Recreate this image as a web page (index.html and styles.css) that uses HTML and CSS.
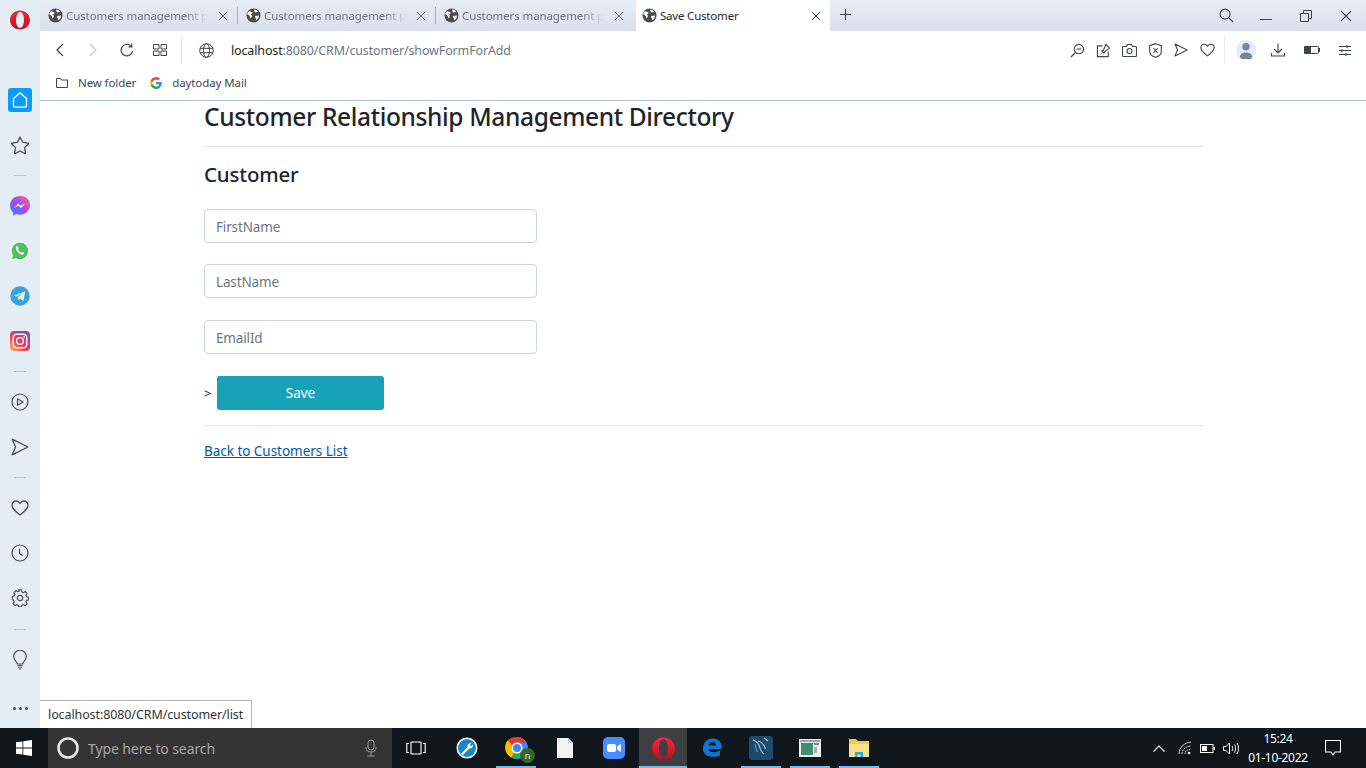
FILE: index.html
```html
<!DOCTYPE html>
<html lang="en">
<head>
<meta charset="utf-8">
<title>Save Customer</title>
<link rel="stylesheet" href="styles.css">
</head>
<body>
<svg class="defs" width="0" height="0" aria-hidden="true">
  <defs>
    <linearGradient id="opera" x1="0" y1="0" x2="0" y2="1"><stop offset="0" stop-color="#f5263a"/><stop offset="1" stop-color="#c00d22"/></linearGradient>
    <symbol id="fav" viewBox="0 0 16 16"><circle cx="8" cy="8" r="7.5" fill="#4a4d52"/><path d="M3 3.5c2 .2 3 1 4 1.2.5.8-.4 1.6-1.2 1.6-.8.5-.3 1.4.4 1.8.3 1.2-.5 2.4-1.2 3-1-1-.7-2.200-1.600-3C2.600 7.500 1.500 7 1.200 6.500 1.500 5.200 2.200 4.200 3 3.500zM9 1.500c1.500.2 3 1 4 2.300-.8.300-1.600.300-2 1-.6.300-1.500-.3-1.700-1-.3-.8-.8-1.300-.3-2.300zM10 8.500c1.200-.5 2.600-.4 3.800-.6 0 2-1 3.800-2.600 5-1-.8-.6-2-1.200-2.700-.5-.5-.4-1.300 0-1.700z" fill="#fff"/></symbol>
    <symbol id="x" viewBox="0 0 12 12"><path d="M1 1l10 10M11 1L1 11" fill="none" stroke="currentColor" stroke-width="1.100"/></symbol>
    <symbol id="heart" viewBox="0 0 18 16"><path d="M9 15C4 11 1 8.500 1 5.200 1 2.800 2.800 1 5 1c1.700 0 3.100 1 4 2.500C9.900 2 11.300 1 13 1c2.200 0 4 1.800 4 4.200C17 8.500 14 11 9 15z" fill="none" stroke="currentColor" stroke-width="1.300" stroke-linejoin="round"/></symbol>
    <symbol id="send" viewBox="0 0 18 18"><path d="M1.200 1.200L17 9 1.200 16.800 4.500 9z" fill="none" stroke="currentColor" stroke-width="1.300" stroke-linejoin="round"/></symbol>
    <symbol id="opera-o" viewBox="0 0 20 20"><path fill-rule="evenodd" d="M10 .5C15.500.5 20 4.700 20 10s-4.500 9.500-10 9.500S0 15.300 0 10 4.500.5 10 .5zM10 2C7.700 2 6 5.600 6 10s1.700 8 4 8 4-3.600 4-8-1.700-8-4-8z" fill="url(#opera)"/></symbol>
  </defs>
</svg>
<div class="screen">
  <div class="browser">
    <aside class="sidebar">
      <div class="logo-cell">
        <svg width="20" height="20"><use href="#opera-o"/></svg>
      </div>
      <div class="side-item">
        <span class="home-tile"><svg width="18" height="18" viewBox="0 0 18 18"><path d="M2.500 7.500L9 1.800l6.500 5.700v6.700c0 1.200-.8 2-2 2h-9c-1.200 0-2-.8-2-2z" fill="none" stroke="#fff" stroke-width="1.300" stroke-linejoin="round"/></svg></span>
      </div>
      <div class="side-item">
        <svg width="18" height="18" viewBox="0 0 18 18"><path d="M9 1l2.500 4.900c.1.300.4.400.7.500l5.100.8c.3.100.4.400.2.600l-3.600 3.600c-.2.200-.3.500-.3.800l.9 5c0 .3-.3.500-.5.400l-4.500-2.400c-.3-.1-.6-.1-.9 0l-4.500 2.400c-.3.100-.6-.1-.5-.4l.9-5c0-.3-.1-.6-.3-.8L.7 7.800c-.2-.2-.1-.5.200-.6l5.100-.8c.3 0 .6-.2.700-.5z" fill="none" stroke="#4c5159" stroke-width="1.300" stroke-linejoin="round"/></svg>
      </div>
      <div class="side-sep"></div>
      <div class="side-item">
        <svg width="20" height="20" viewBox="0 0 20 20"><defs><linearGradient id="msg" x1="0" y1="1" x2="1" y2="0"><stop offset="0" stop-color="#1f8cff"/><stop offset=".5" stop-color="#a04cf5"/><stop offset="1" stop-color="#ff6b6b"/></linearGradient></defs><path d="M10 0C4.400 0 0 4.100 0 9.500c0 2.800 1.200 5.300 3.200 7v3.300l3.100-1.700c1.200.4 2.400.6 3.700.6 5.600 0 10-4.100 10-9.700S15.600 0 10 0z" fill="url(#msg)"/><path d="M4 12l4.200-4.400 2.400 2.200 4.600-2.400-4.200 4.500-2.500-2.300z" fill="#fff"/></svg>
      </div>
      <div class="side-item">
        <svg width="20" height="20" viewBox="0 0 20 20"><path d="M10 .8A9 9 0 0 0 2.300 14.500L1 19l4.700-1.200A9 9 0 1 0 10 .8z" fill="#4ec05f" stroke="#fff" stroke-width="1.200"/><path d="M6.500 5.500c-1 1-.9 2.700.6 4.800 1.600 2.200 3.500 3.500 5.100 3.400 1-.1 1.900-1 1.800-1.800l-2-1.100-1 .9c-1-.4-2.300-1.700-2.900-2.900l.8-1-1-2.200c-.4-.3-.9-.4-1.400-.1z" fill="#fff"/></svg>
      </div>
      <div class="side-item">
        <svg width="20" height="20" viewBox="0 0 20 20"><circle cx="10" cy="10" r="9.700" fill="#37a2dc"/><path d="M3.800 9.800l11.500-4.600-1.900 9.800-3.400-2.500-1.700 1.700-.4-3 5-4.500-6.200 3.800z" fill="#e9f4fb"/></svg>
      </div>
      <div class="side-item">
        <svg width="20" height="20" viewBox="0 0 20 20"><defs><linearGradient id="ig" x1="0" y1="1" x2="1" y2="0"><stop offset="0" stop-color="#fdc64e"/><stop offset=".35" stop-color="#ee4a4f"/><stop offset=".7" stop-color="#c4358f"/><stop offset="1" stop-color="#5a57c9"/></linearGradient></defs><rect width="20" height="20" rx="4" fill="url(#ig)"/><rect x="3.200" y="3.200" width="13.600" height="13.600" rx="3.500" fill="none" stroke="#fff" stroke-width="1.400"/><circle cx="10" cy="10" r="3.400" fill="none" stroke="#fff" stroke-width="1.400"/><circle cx="14.200" cy="5.800" r=".9" fill="#fff"/></svg>
      </div>
      <div class="side-sep"></div>
      <div class="side-item">
        <svg width="18" height="18" viewBox="0 0 18 18"><circle cx="9" cy="9" r="8" fill="none" stroke="#4c5159" stroke-width="1.200"/><path d="M6.500 5.800l5.600 3.200-5.600 3.200z" fill="none" stroke="#4c5159" stroke-width="1.200" stroke-linejoin="round"/></svg>
      </div>
      <div class="side-item side-icon">
        <svg width="18" height="18"><use href="#send"/></svg>
      </div>
      <div class="side-sep"></div>
      <div class="side-item side-icon">
        <svg width="18" height="16"><use href="#heart"/></svg>
      </div>
      <div class="side-item">
        <svg width="18" height="18" viewBox="0 0 18 18"><circle cx="9" cy="9" r="8" fill="none" stroke="#4c5159" stroke-width="1.200"/><path d="M8.500 4.500V9.500l3 2.300" fill="none" stroke="#4c5159" stroke-width="1.200"/></svg>
      </div>
      <div class="side-item">
        <svg width="18" height="18" viewBox="0 0 18 18"><path d="M7.500 1h3l.4 2.200 1.500.7 1.900-1.200 2.100 2.100-1.200 1.900.7 1.500 2.100.4v3l-2.100.4-.7 1.500 1.200 1.900-2.100 2.100-1.900-1.200-1.500.7-.4 1.600h-3l-.4-1.600-1.500-.7-1.900 1.200-2.100-2.100 1.200-1.900-.7-1.500L1 10.600v-3l2.100-.4.7-1.500-1.200-1.900 2.100-2.100 1.900 1.200 1.500-.7z" transform="translate(.4 -.1) scale(.96)" fill="none" stroke="#4c5159" stroke-width="1.200" stroke-linejoin="round"/><circle cx="9" cy="9" r="2.700" fill="none" stroke="#4c5159" stroke-width="1.200"/></svg>
      </div>
      <div class="side-sep side-sep-b"></div>
      <div class="side-item">
        <svg width="16" height="20" viewBox="0 0 16 20"><path d="M5.500 14c0-2-3.800-3.500-3.800-7.500a6.300 6.300 0 0 1 12.600 0c0 4-3.800 5.500-3.800 7.500z" fill="none" stroke="#4c5159" stroke-width="1.200"/><path d="M5.500 15.500h5M6 17.200h4M6.800 19h2.400" stroke="#4c5159" stroke-width="1.100"/></svg>
      </div>
      <div class="side-dots"><i></i><i></i><i></i></div>
    </aside>

    <div class="window">
      <div class="tabstrip">
        <div class="tab">
          <svg class="fav" width="15" height="15"><use href="#fav"/></svg>
          <span class="tab-title">Customers management pc</span>
          <svg class="tab-x" width="10" height="10"><use href="#x"/></svg>
        </div>
        <div class="tab">
          <svg class="fav" width="15" height="15"><use href="#fav"/></svg>
          <span class="tab-title">Customers management pc</span>
          <svg class="tab-x" width="10" height="10"><use href="#x"/></svg>
        </div>
        <div class="tab tab-last">
          <svg class="fav" width="15" height="15"><use href="#fav"/></svg>
          <span class="tab-title">Customers management pc</span>
          <svg class="tab-x" width="10" height="10"><use href="#x"/></svg>
        </div>
        <div class="tab tab-active">
          <svg class="fav" width="15" height="15"><use href="#fav"/></svg>
          <span class="tab-title">Save Customer</span>
          <svg class="tab-x" width="10" height="10"><use href="#x"/></svg>
        </div>
        <svg class="tab-plus" width="11" height="11" viewBox="0 0 11 11"><path d="M5.500 0v11M0 5.500h11" stroke="#3e434a" stroke-width="1.100"/></svg>
        <div class="win-controls">
          <svg width="15" height="15" viewBox="0 0 16 16"><circle cx="6.500" cy="6.500" r="5.300" fill="none" stroke="#3e434a" stroke-width="1.200"/><path d="M10.500 10.500l4.500 4.500" stroke="#3e434a" stroke-width="1.400"/></svg>
          <svg class="wc-min" width="12" height="12" viewBox="0 0 12 12"><path d="M0 9.500h12" stroke="#3e434a" stroke-width="1"/></svg>
          <svg class="wc-res" width="12" height="12" viewBox="0 0 12 12"><path d="M.5 3.500h8v8h-8zM3.500 3.500v-3h8v8h-3" fill="none" stroke="#3e434a" stroke-width="1"/></svg>
          <svg class="wc-close" width="12" height="12"><use href="#x"/></svg>
        </div>
      </div>

      <div class="toolbar">
        <svg class="t-back" width="10" height="14" viewBox="0 0 10 14"><path d="M8 1L2 7l6 6" fill="none" stroke="#3e434a" stroke-width="1.200"/></svg>
        <svg class="t-fwd" width="10" height="14" viewBox="0 0 10 14"><path d="M2 1l6 6-6 6" fill="none" stroke="#c3c8ce" stroke-width="1.200"/></svg>
        <svg class="t-reload" width="14" height="14" viewBox="0 0 14 14"><path d="M12.500 8a5.700 5.700 0 1 1-1.700-5M11.800.5v3.300H8.500" fill="none" stroke="#3e434a" stroke-width="1.200"/></svg>
        <svg class="t-dial" width="14" height="12" viewBox="0 0 14 12"><path d="M.5.500h5.500v4.500H.5zM8 .5h5.500v4.500H8zM.5 7h5.500v4.500H.5zM8 7h5.500v4.500H8z" fill="none" stroke="#3e434a" stroke-width="1"/></svg>
        <span class="t-sep t-sep-a"></span>
        <svg class="t-globe" width="15" height="15" viewBox="0 0 15 15"><g fill="none" stroke="#3e434a" stroke-width="1"><circle cx="7.500" cy="7.500" r="6.800"/><ellipse cx="7.500" cy="7.500" rx="3" ry="6.800"/><path d="M1 5.300h13M1 9.700h13"/></g></svg>
        <span class="url"><b>localhost</b>:8080/CRM/customer/showFormForAdd</span>
        <div class="t-right">
          <svg width="15" height="15" viewBox="0 0 16 15"><circle cx="9.500" cy="6" r="5" fill="none" stroke="#3e434a" stroke-width="1.200"/><path d="M7 6h5" stroke="#3e434a" stroke-width="1.200"/><path d="M6 9.500L1 14.500" stroke="#3e434a" stroke-width="1.400"/></svg>
          <svg width="15" height="15" viewBox="0 0 16 15"><path d="M7 2.500H1.500v11.500H13V8.500" fill="none" stroke="#3e434a" stroke-width="1.200"/><path d="M10.500 1l4 4-5 3.500-1 2-2.500-2.500 2-1z" fill="none" stroke="#3e434a" stroke-width="1.200" stroke-linejoin="round"/><path d="M6 10.500l-1.500 1.500" stroke="#3e434a"/></svg>
          <svg width="15" height="13" viewBox="0 0 15 13"><path d="M1.500 2.500h3l1-2h4l1 2h3c.5 0 1 .5 1 1v8c0 .5-.5 1-1 1h-12c-.5 0-1-.5-1-1v-8c0-.5.5-1 1-1z" fill="none" stroke="#3e434a" stroke-width="1.100"/><circle cx="7.500" cy="7" r="2.500" fill="none" stroke="#3e434a" stroke-width="1.100"/></svg>
          <svg width="13" height="15" viewBox="0 0 13 15"><path d="M6.500.7l5.800 2v6c0 2.500-2.500 4.500-5.800 5.600C3.200 13.200.7 11.200.7 8.700v-6z" fill="none" stroke="#3e434a" stroke-width="1.100"/><path d="M4.300 5l4.400 5M8.700 5l-4.400 5" stroke="#3e434a" stroke-width="1.100"/></svg>
          <svg width="14" height="14"><use href="#send"/></svg>
          <svg width="15" height="14"><use href="#heart"/></svg>
        </div>
        <span class="t-sep t-sep-b"></span>
        <span class="avatar"><svg width="20" height="20" viewBox="0 0 20 20"><circle cx="10" cy="6.700" r="3.700" fill="#74879c"/><path d="M3.500 19c0-4.500 2.500-6.500 6.500-6.500s6.500 2 6.500 6.500z" fill="#74879c"/></svg></span>
        <svg class="t-dl" width="14" height="14" viewBox="0 0 14 14"><path d="M7 .5v9M3 6l4 4 4-4M.5 10v3h13v-3" fill="none" stroke="#3e434a" stroke-width="1.100"/></svg>
        <svg class="t-bat" width="16" height="8" viewBox="0 0 16 8"><rect x=".5" y=".5" width="14" height="7" rx="1" fill="#fff" stroke="#3e434a"/><rect x="0" y="0" width="7" height="8" rx="1" fill="#3e434a"/><rect x="15" y="2" width="1" height="4" fill="#3e434a"/></svg>
        <svg class="t-set" width="12" height="11" viewBox="0 0 12 11"><path d="M0 1.500h12M0 5.500h12M0 9.500h12M8 0v3M3 4v3M7 8v3" stroke="#3e434a" stroke-width="1"/></svg>
      </div>

      <div class="bookmarks">
        <svg class="bm-folder" width="12" height="10" viewBox="0 0 12 10"><path d="M.5.500h4l1 1.500h6v7.500H.5z" fill="none" stroke="#3e434a" stroke-width="1"/></svg>
        <span class="bm-text">New folder</span>
        <svg class="bm-g" width="12" height="12" viewBox="0 0 12 12"><path d="M11.800 6.100c0-.4 0-.8-.1-1.100H6v2.200h3.300c-.1.700-.5 1.300-1.200 1.700v1.500h1.900c1.100-1 1.800-2.500 1.800-4.300z" fill="#4285f4"/><path d="M6 12c1.600 0 3-.5 4-1.500L8.100 9c-.5.400-1.200.6-2.100.6-1.600 0-2.900-1-3.400-2.500H.7v1.500C1.700 10.600 3.700 12 6 12z" fill="#34a853"/><path d="M2.600 7.100a3.500 3.500 0 0 1 0-2.200V3.400H.7a6 6 0 0 0 0 5.200z" fill="#fbbc05"/><path d="M6 2.400c.9 0 1.700.3 2.300.9L10 1.600A6 6 0 0 0 .7 3.400l1.900 1.500C3.100 3.400 4.400 2.400 6 2.400z" fill="#ea4335"/></svg>
        <span class="bm-text">daytoday Mail</span>
      </div>

      <main class="page">
        <div class="container">
          <h3 class="page-title">Customer Relationship Management Directory</h3>
          <hr class="rule">
          <h4 class="form-title">Customer</h4>
          <form class="form">
            <input class="field" type="text" placeholder="FirstName">
            <input class="field" type="text" placeholder="LastName">
            <input class="field" type="text" placeholder="EmailId">
            <div class="save-row"><span class="stray">&gt;</span><button class="save" type="button">Save</button></div>
          </form>
          <hr class="rule rule-b">
          <a class="back" href="#">Back to Customers List</a>
        </div>
        <div class="status">localhost:8080/CRM/customer/list</div>
      </main>
    </div>
  </div>

  <footer class="taskbar">
    <div class="start"><svg width="16" height="16" viewBox="0 0 16 16"><path d="M0 2.300l6.500-.9v6.200H0zM7.300 1.300L16 0v7.600H7.300zM0 8.400h6.500v6.200L0 13.700zM7.300 8.400H16V16l-8.700-1.200z" fill="#fff"/></svg></div>
    <div class="search">
      <svg class="cortana" width="22" height="22" viewBox="0 0 22 22"><circle cx="11" cy="11" r="9.500" fill="none" stroke="#e6e6e6" stroke-width="2.600"/></svg>
      <span class="search-text">Type here to search</span>
      <svg class="mic" width="12" height="18" viewBox="0 0 12 18"><rect x="3" y="1" width="6" height="10" rx="3" fill="none" stroke="#9a9a9a"/><path d="M.8 8c0 3.500 2 5 5.200 5s5.200-1.500 5.200-5M6 13v3.500M2.500 17h7" fill="none" stroke="#9a9a9a"/></svg>
    </div>
    <div class="tb-cell tb-view"><svg width="20" height="14" viewBox="0 0 20 14"><path d="M5 1h10v12H5zM3 2.500H.8v9H3M17 2.500h2.200v9H17" fill="none" stroke="#fff" stroke-width="1.100"/></svg></div>
    <div class="tb-cell tb-a"><svg width="22" height="22" viewBox="0 0 22 22"><circle cx="11" cy="11" r="10.500" fill="#fff"/><circle cx="11" cy="11" r="9" fill="#1a86c8"/><path d="M5 17l6.500-7c-.4-1.800 1-4 4-4l-1.700 2 1.300 1.300 2-1.700c.2 2.500-2 4.300-4 4L7 18z" fill="#fff"/></svg></div>
    <div class="tb-cell tb-b tb-on">
      <svg class="chrome" width="24" height="24" viewBox="0 0 24 24"><circle cx="12" cy="12" r="11" fill="#4285f4"/><path d="M12 1a11 11 0 0 1 9.500 5.500H12A5.500 5.500 0 0 0 7 9.500L3 4a11 11 0 0 1 9-3z" fill="#e33b2e"/><path d="M3 4l4 5.500c-1 2 .1 5 2.500 6.500L6.500 21.500A11 11 0 0 1 3 4z" fill="#f8bd00"/><path d="M9.500 16l-3 5.500A11 11 0 0 0 12 23l6-7z" fill="#2da94f"/><circle cx="12" cy="12" r="4.800" fill="#4285f4" stroke="#fff" stroke-width="1.500"/></svg>
      <span class="n-badge">n</span>
    </div>
    <div class="tb-cell tb-c"><svg width="16" height="20" viewBox="0 0 16 20"><path d="M0 0h11l5 5v15H0z" fill="#f4f4f4"/><path d="M11 0l5 5h-5z" fill="#cfcfcf"/></svg></div>
    <div class="tb-cell tb-d"><svg width="22" height="22" viewBox="0 0 22 22"><rect width="22" height="22" rx="5" fill="#4a8cff"/><rect x="4" y="7" width="9" height="8" rx="2" fill="#fff"/><path d="M14 9.500l4-2.500v8l-4-2.500z" fill="#fff"/></svg></div>
    <div class="tb-cell tb-e tb-on tb-active"><svg width="23" height="23"><use href="#opera-o"/></svg></div>
    <div class="tb-cell tb-f"><svg width="20" height="20" viewBox="0 0 20 20"><path d="M1 11C1 5 5 .5 11 .5c5 0 8.500 3.200 8.500 8v2.500H6.500c.3 3.500 5.500 4.500 11.500 1.500v5c-6 2.500-14 1.500-16-3-.8-1.500-1-2.500-1-3.500zM6.500 7.500h7.500C14 5 12.500 4 10.500 4S7 5 6.500 7.500z" fill="#0c78d6"/></svg></div>
    <div class="tb-cell tb-g tb-on"><svg width="24" height="24" viewBox="0 0 24 24"><rect width="24" height="24" rx="3" fill="#1f4a6e"/><path d="M4 4c3 1 6 4 7 8 .5 2.500 2 4 3.500 6M9 5c4 1 6.500 4.500 7.500 8M15 2l4 3" fill="none" stroke="#a9c6dc" stroke-width="1.100"/><path d="M6 8c0 3 1.500 5 2.500 8" fill="none" stroke="#6f97b5" stroke-width="1.100"/></svg></div>
    <div class="tb-cell tb-h tb-on"><svg width="22" height="18" viewBox="0 0 22 18"><rect width="22" height="18" fill="#eef0f0"/><rect x="1" y="1" width="20" height="2" fill="#9aa4aa"/><rect x="2" y="4" width="12" height="12" fill="#3f8f70"/><rect x="15" y="4" width="5" height="2" fill="#7a8a92"/><rect x="15" y="8" width="3" height="6" fill="#9fb2b8"/></svg></div>
    <div class="tb-cell tb-i tb-on"><svg width="22" height="18" viewBox="0 0 22 18"><path d="M1 0h7l2 2h11v16H1z" fill="#f4c84f"/><path d="M1 5h20v13H1z" fill="#fbe08a"/><path d="M7 18v-5h8v5h-2.500v-2.500h-3V18z" fill="#2fa9e6"/></svg></div>
    <div class="tray">
      <svg class="tr-up" width="12" height="7" viewBox="0 0 12 7"><path d="M.5 6.500L6 1l5.500 5.500" fill="none" stroke="#fff" stroke-width="1.100"/></svg>
      <svg class="tr-wifi" width="14" height="14" viewBox="0 0 14 14"><g fill="none" stroke="#d0d0d0" stroke-width="1"><path d="M1 13C1 7 6 1.500 13 1"/><path d="M4 13c0-4 3.500-8 9-8" stroke-dasharray="2 .6"/><path d="M7 13c0-2.500 2-4.500 5-4.500" stroke-dasharray="1.500 .6"/></g><circle cx="11" cy="12" r="1.300" fill="#fff"/></svg>
      <svg class="tr-bat" width="15" height="9" viewBox="0 0 15 9"><rect x=".5" y=".5" width="12.500" height="8" fill="none" stroke="#fff"/><rect x="2" y="2" width="5" height="5" fill="#fff"/><rect x="13.500" y="3" width="1.500" height="3" fill="#fff"/></svg>
      <svg class="tr-vol" width="17" height="13" viewBox="0 0 17 13"><path d="M.5 4.500h2.500L6.500 1v11L3 8.500H.5z" fill="none" stroke="#fff"/><path d="M9 4c1 1.500 1 3.500 0 5M11.500 2.500c1.500 2.500 1.500 5.500 0 8M14 1c2 3 2 8 0 11" fill="none" stroke="#fff"/></svg>
      <div class="clock"><span>15:24</span><span>01-10-2022</span></div>
      <svg class="tr-note" width="16" height="16" viewBox="0 0 16 16"><path d="M.5.500h15v11.500H10l-2 3-2-3H.500z" fill="none" stroke="#fff" stroke-width="1.100"/></svg>
    </div>
  </footer>
</div>
</body>
</html>
```

FILE: styles.css
```css
* { box-sizing: border-box; }
html, body { margin: 0; padding: 0; }
body {
  width: 1366px;
  height: 768px;
  overflow: hidden;
  font-family: "Noto Sans", "Open Sans", sans-serif;
  background: #fff;
}
.defs { position: absolute; }
svg { display: block; flex: none; }
.screen { display: flex; flex-direction: column; height: 768px; }
.browser { display: flex; height: 728px; }

/* sidebar */
.sidebar {
  width: 40px;
  flex: none;
  display: flex;
  flex-direction: column;
  align-items: center;
  background: #e4ecf4;
}
.logo-cell { height: 77.5px; width: 100%; padding-top: 10px; display: flex; justify-content: center; align-items: flex-start; }
.side-item { height: 45px; width: 100%; display: flex; align-items: center; justify-content: center; }
.side-icon { color: #4c5159; }
.home-tile { width: 24px; height: 24px; border-radius: 3px; background: #0a9bff; display: flex; align-items: center; justify-content: center; }
.side-sep { height: 16px; width: 100%; display: flex; align-items: center; justify-content: center; }
.side-sep::before { content: ""; width: 12px; height: 1px; background: #b9c5d1; }
.side-sep-b { height: 17px; }
.side-dots { margin-top: auto; height: 40px; display: flex; gap: 3px; align-items: center; }
.side-dots i { width: 3px; height: 3px; border-radius: 50%; background: #4c5159; }

.window { flex: 1; min-width: 0; display: flex; flex-direction: column; }

/* tabs */
.tabstrip {
  height: 31px;
  flex: none;
  display: flex;
  align-items: stretch;
  background: linear-gradient(#e6ecf4, #d9e1ea);
}
.tab {
  width: 198px;
  display: flex;
  align-items: center;
  padding-left: 8px;
  position: relative;
  color: #6e7681;
  font-size: 11.500px;
}
.tab::after { content: ""; width: 1px; height: 17px; background: #a8b1bb; position: absolute; right: 0; top: 7px; }
.tab-last::after { display: none; }
.tab-title {
  margin-left: 3px;
  width: 142px;
  white-space: nowrap;
  overflow: hidden;
  letter-spacing: -.1px;
  -webkit-mask-image: linear-gradient(90deg, #000 85%, transparent);
  mask-image: linear-gradient(90deg, #000 85%, transparent);
}
.tab-x { margin-left: 10px; color: #575c63; }
.tab-active {
  width: 194px;
  margin-left: 2px;
  background: #fff;
  color: #24282d;
  border-radius: 3px 3px 0 0;
  padding-left: 6px;
}
.tab-active::after { display: none; }
.tab-active .tab-title { -webkit-mask-image: none; mask-image: none; margin-left: 3px; width: 146px; letter-spacing: -.2px; }
.tab-active .tab-x { margin-left: 5px; color: #30343a; }
.tab-plus { margin: 9px 0 0 10px; }
.win-controls { margin-left: auto; display: flex; align-items: center; padding-right: 14px; }
.wc-min { margin-left: 26px; }
.wc-res { margin-left: 28px; }
.wc-close { margin-left: 28px; color: #3e434a; }

/* toolbar */
.toolbar {
  height: 35px;
  flex: none;
  display: flex;
  align-items: center;
  background: #fff;
  padding: 3px 0 0 15px;
}
.t-fwd { margin-left: 23px; }
.t-reload { margin-left: 22px; }
.t-dial { margin-left: 19px; }
.t-sep { width: 1px; height: 28px; background: #e6e9ed; }
.t-sep-a { margin-left: 14px; }
.t-globe { margin-left: 17px; }
.url { margin-left: 17px; font-size: 12.500px; color: #6c7680; letter-spacing: -.14px; white-space: nowrap; }
.url b { font-weight: 400; color: #1c1f23; }
.t-right { display: grid; grid-template-columns: repeat(6, 26px); justify-items: center; align-items: center; margin-left: auto; color: #3e434a; }
.t-sep-b { margin-left: 4px; }
.avatar { margin-left: 11px; width: 20px; height: 20px; border-radius: 50%; background: #e4ecf4; overflow: hidden; }
.t-dl { margin-left: 15px; }
.t-bat { margin-left: 19px; }
.t-set { margin-left: 19px; margin-right: 15px; }

/* bookmarks */
.bookmarks {
  height: 35px;
  flex: none;
  display: flex;
  align-items: center;
  padding: 0 0 1px 16px;
  background: #fff;
  border-bottom: 1px solid #b4c3d0;
  font-size: 11.500px;
  color: #3d4751;
}
.bm-text { margin-left: 10px; letter-spacing: -.1px; }
.bm-g { margin-left: 14px; }

/* page */
.page { flex: 1; position: relative; background: #fff; padding-left: 164px; color: #212529; }
.container { width: 999px; }
.page-title { margin: 0; font-size: 24.500px; font-weight: 500; line-height: 32px; letter-spacing: -.36px; }
.rule { border: 0; border-top: 1px solid #e3e3e3; margin: 13px 0 0; }
.form-title { margin: 14px 0 0; font-size: 20.500px; font-weight: 500; line-height: 27px; letter-spacing: -.2px; }
.form { margin-top: 21px; width: 333px; display: flex; flex-direction: column; }
.field {
  width: 333px;
  height: 34px;
  margin-bottom: 22px;
  padding: 1px 11px 0;
  font: 13.500px "Noto Sans", "Open Sans", sans-serif;
  letter-spacing: -.15px;
  border: 1px solid #ced4da;
  border-radius: 4px;
  color: #495057;
  background: #fff;
}
.field:first-child { margin-bottom: 21px; }
.field::placeholder { color: #6c757d; opacity: 1; }
.save-row { display: flex; align-items: center; font-size: 13px; }
.stray { width: 13px; }
.save {
  width: 167px;
  height: 34px;
  border: 0;
  border-radius: 3px;
  background: #17a2b8;
  color: #fff;
  font: 13.500px "Noto Sans", "Open Sans", sans-serif;
  padding: 0 0 1px;
}
.rule-b { margin-top: 15px; }
.back { display: inline-block; margin-top: 15px; font-size: 13.500px; line-height: 20px; color: #0056b3; text-decoration: underline; letter-spacing: -.03px; }
.status {
  position: absolute;
  left: 0;
  bottom: 0;
  width: 212px;
  height: 28px;
  padding: 0 0 0 8px;
  line-height: 27px;
  border: 1px solid #b5b5b5;
  border-width: 1px 1px 0 0;
  background: #fff;
  font-size: 12.500px;
  color: #30343a;
  white-space: nowrap;
  letter-spacing: -.1px;
}

/* taskbar */
.taskbar {
  height: 40px;
  flex: none;
  display: flex;
  align-items: stretch;
  background: #0f171d;
}
.start { width: 48px; display: flex; align-items: center; justify-content: center; }
.search { width: 344px; background: #343434; display: flex; align-items: center; padding-left: 9px; }
.search-text { margin-left: 9px; font-size: 14px; color: #a6a6a6; letter-spacing: -.1px; white-space: nowrap; }
.mic { margin-left: auto; margin-right: 15px; }
.tb-cell { position: relative; display: flex; align-items: center; justify-content: center; width: 49px; }
.tb-view { width: 48px; }
.tb-a { margin-left: 3px; width: 48px; }
.tb-d { width: 50px; }
.tb-active { background: #3d4042; width: 48px; }
.tb-on::after { content: ""; position: absolute; bottom: 0; left: 4.500px; right: 4px; height: 2px; background: #76b9ed; }
.tb-active::after { left: 0; right: 0; }
.chrome { margin-left: 2px; }
.n-badge {
  position: absolute;
  left: 29px;
  top: 20px;
  width: 15px;
  height: 15px;
  border-radius: 50%;
  background: #2f6a24;
  color: #e8f0e6;
  font-size: 9px;
  line-height: 15px;
  text-align: center;
}
.tray { margin-left: auto; display: flex; align-items: center; padding-right: 25px; }
.tr-wifi { margin-left: 13px; }
.tr-bat { margin-left: 8px; }
.tr-vol { margin-left: 8px; }
.clock { margin-left: 2px; width: 72px; display: flex; flex-direction: column; align-items: center; color: #fff; font-size: 12px; line-height: 19px; letter-spacing: -.3px; }
.tr-note { margin-left: 11px; }
```
